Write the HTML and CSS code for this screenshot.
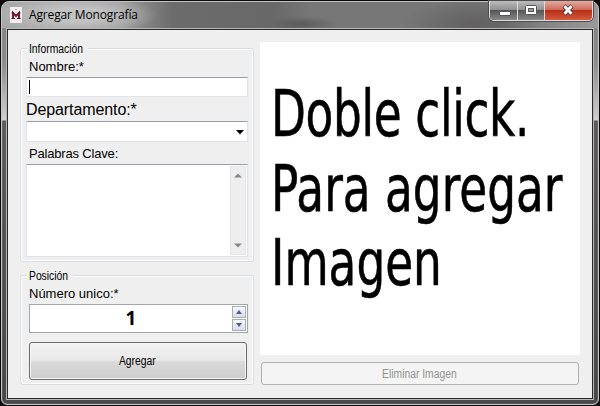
FILE: index.html
```html
<!DOCTYPE html>
<html lang="es">
<head>
<meta charset="utf-8">
<title>Agregar Monografía</title>
<link rel="stylesheet" href="styles.css">
</head>
<body>
<div class="window">
  <header class="titlebar">
    <svg class="app-icon" width="12" height="16" viewBox="0 0 12 16"><rect width="12" height="16" fill="#f1eef0"/><path d="M3 11.5V6L6 9l3-3v5.5" fill="none" stroke="#75183a" stroke-width="2"/><path d="M1.5 11.5H5M7 11.5h3.5M1.5 6H4M8 6h2.5" stroke="#5d1934"/><path d="M5 3l1-1 1 1" fill="none" stroke="#b8a9b0"/></svg>
    <span class="title">Agregar Monografía</span>
    <div class="controls">
      <span class="control min"><svg width="28" height="18"><rect x="9.5" y="10.5" width="11" height="4" rx=".5" fill="#fff" stroke="#55555f"/></svg></span>
      <span class="control max"><svg width="26" height="18"><rect x="7.5" y="4.5" width="11" height="9" rx="1" fill="#fff" stroke="#55555f"/><rect x="10.5" y="7.5" width="5" height="3" fill="#999" stroke="#55555f"/></svg></span>
      <span class="control close"><svg width="46" height="18"><path d="M19 5l8 8M27 5l-8 8" stroke="#5c4047" stroke-width="4.6"/><path d="M19.5 5.3l7 7.4M26.5 5.3l-7 7.4" stroke="#fff" stroke-width="2.8"/></svg></span>
    </div>
  </header>
  <main class="client">
    <div class="form">
      <section class="group info">
        <div class="legend"><span class="narrow">Información</span></div>
        <div class="label name-label">Nombre:*</div>
        <div class="field name"><i class="caret"></i></div>
        <div class="label dept-label">Departamento:*</div>
        <div class="field combo"><svg width="8" height="5"><path d="M0 0h8L4 4.6z" fill="#000"/></svg></div>
        <div class="label keys-label">Palabras Clave:</div>
        <div class="field area">
          <div class="scroll">
            <svg width="8" height="5"><path d="M0 4.5h8L4 .5z" fill="#888"/></svg>
            <svg width="8" height="5"><path d="M0 .5h8L4 4.5z" fill="#888"/></svg>
          </div>
        </div>
      </section>
      <section class="group position">
        <div class="legend"><span class="narrow">Posición</span></div>
        <div class="label number-label">Número unico:*</div>
        <div class="spinner">
          <span class="value">1</span>
          <div class="steps">
            <span><svg width="6" height="4"><path d="M0 4h6L3 0z" fill="#4c5d86"/></svg></span>
            <span><svg width="6" height="4"><path d="M0 0h6L3 4z" fill="#4c5d86"/></svg></span>
          </div>
        </div>
        <div class="button add"><span class="narrow">Agregar</span></div>
      </section>
    </div>
    <div class="preview">
      <div class="picture"><div class="message"><span class="first">Doble click.</span><br>Para agregar<br>Imagen</div></div>
      <div class="button remove"><span class="narrow">Eliminar Imagen</span></div>
    </div>
  </main>
</div>
</body>
</html>
```
FILE: styles.css
```css
* { box-sizing: border-box; }
body { margin: 0; width: 600px; height: 406px; overflow: hidden; background: #0d0a0e; font-family: "Liberation Sans", Arial, sans-serif; color: #000; }
svg { display: block; }
.window {
  width: 598px; height: 404px; margin: 1px; padding: 0 5px 5px;
  border: 1px solid #c4c4c4; border-radius: 8px 8px 6px 6px;
  background:
    linear-gradient(#999 0, #858585 28px, #8a8a8a 60px, #d0cdcd 118px, #5d5b5b 119px, #484848 100%);
  box-shadow: inset 0 0 1px #ddd;
  display: flex; flex-direction: column;
}
.titlebar {
  height: 26px; margin: 0 -5px; padding-left: 8px; display: flex; align-items: flex-start;
  border-radius: 7px 7px 0 0;
  background:
    radial-gradient(ellipse 80px 20px at 76px 13px, rgba(205,205,205,.75) 35%, rgba(180,180,180,0) 100%),
    radial-gradient(ellipse 34px 8px at 302px 22px, rgba(50,50,50,.4), transparent),
    radial-gradient(ellipse 70px 24px at 470px 22px, rgba(65,60,60,.35), transparent),
    linear-gradient(90deg, #aaa 0, #999 120px, #6c6c6c 170px, #686868 270px, #777 310px, #777 430px, #727272 500px, #999 100%);
}
.app-icon { margin: 5px 0 0 0; }
.title { font: 12px/18px "Open Sans", "Noto Sans", sans-serif; margin: 4px 0 0 7px; letter-spacing: -.14px; white-space: nowrap; }
.controls { margin: -1px 5px 0 auto; display: flex; height: 20px; border: 1px solid #ddd; border-top: 0; border-radius: 0 0 5px 5px; overflow: hidden; box-shadow: 0 0 0 1px #4d4d4d; }
.control { background: linear-gradient(#bdbdbd, #919191 45%, #555 48%, #888 100%); border-right: 1px solid #ddd; }
.min { width: 28px; }
.max { width: 27px; }
.close { width: 47px; border: 0; background: linear-gradient(#e3aaa0, #cf6d5c 45%, #b72c16 48%, #d65a3c 100%); }
.client {
  flex: 1; padding: 12px 11px 0 12px; display: flex; gap: 6px; background: #efefef;
  border: 1px solid #292929; outline: 1px solid #b8b8b8;
  margin: 1px 0 0;
}
.form { width: 234px; display: flex; flex-direction: column; }
.group { border: 1px solid #d7dde2; border-radius: 3px; box-shadow: inset 0 0 0 1px #fff; padding: 0 5px; }
.info { height: 214px; margin-top: 6px; }
.position { height: 110px; margin-top: 13px; }
.legend { width: 61px; height: 14px; margin: -8px 0 0 1px; padding-left: 2px; background: #efefef; font-size: 12px; line-height: 17px; }
.position .legend { width: 46px; }
.narrow { display: inline-block; transform: scaleX(.86); transform-origin: left; white-space: nowrap; }
.label { white-space: nowrap; font-size: 13px; line-height: 16px; height: 16px; padding-left: 3px; }
.name-label { margin-top: 4px; }
.field { width: 222px; background: #fff; border: 1px solid #e2e3ea; border-top-color: #9a9da5; }
.name { height: 20px; margin-top: 2px; padding: 2px; }
.caret { display: block; width: 1px; height: 14px; background: #000; }
.dept-label { font-size: 16px; line-height: 20px; height: 20px; margin-top: 3px; padding-left: 0; letter-spacing: -.1px; }
.combo { height: 21px; margin-top: 1px; display: flex; justify-content: flex-end; align-items: center; padding: 1px 3px 0 0; }
.keys-label { margin-top: 4px; letter-spacing: -.18px; }
.area { height: 93px; margin-top: 2px; display: flex; justify-content: flex-end; padding: 1px; }
.scroll { width: 16px; background: #eee; border: 1px solid #e5e5e5; display: flex; flex-direction: column; justify-content: space-between; align-items: center; padding: 6px 0; }
.number-label { margin-top: 4px; }
.spinner { width: 219px; height: 29px; margin: 2px 0 0 3px; background: #fff; border: 1px solid #a2a5a9; display: flex; padding: 1px; }
.value { flex: 1; font: bold 19px/24px "Open Sans", Arial, sans-serif; text-align: center; padding-right: 1px; }
.steps { width: 14px; display: flex; flex-direction: column; gap: 1px; }
.steps span { flex: 1; display: flex; align-items: center; justify-content: center; border: 1px solid #a9adb5; background: linear-gradient(#f8f8fb, #d9dde8); }
.button { display: flex; align-items: center; justify-content: center; font-size: 12px; border-radius: 3px; padding-right: 2px; }
.button .narrow { transform-origin: center; }
.add { width: 218px; height: 38px; margin: 9px 0 0 3px; border: 1px solid #6b6b6b; background: linear-gradient(#f2f2f2, #e8e8e8 48%, #d9d9d9 52%, #cdcdcd); box-shadow: inset 0 0 0 1px #f6f6f6; }
.preview { width: 320px; }
.picture { height: 313px; background: #fff; padding: 35px 0 0 11px; overflow: hidden; }
.message { width: max-content; font: 64px/74.5px "DejaVu Sans", sans-serif; transform: scaleX(.709); transform-origin: left top; -webkit-text-stroke: .6px #000; }
.first { letter-spacing: -.5px; }
.remove { width: 318px; height: 23px; margin: 7px 0 0 1px; border: 1px solid #adb2b5; background: #f4f4f4; color: #929292; }
```
